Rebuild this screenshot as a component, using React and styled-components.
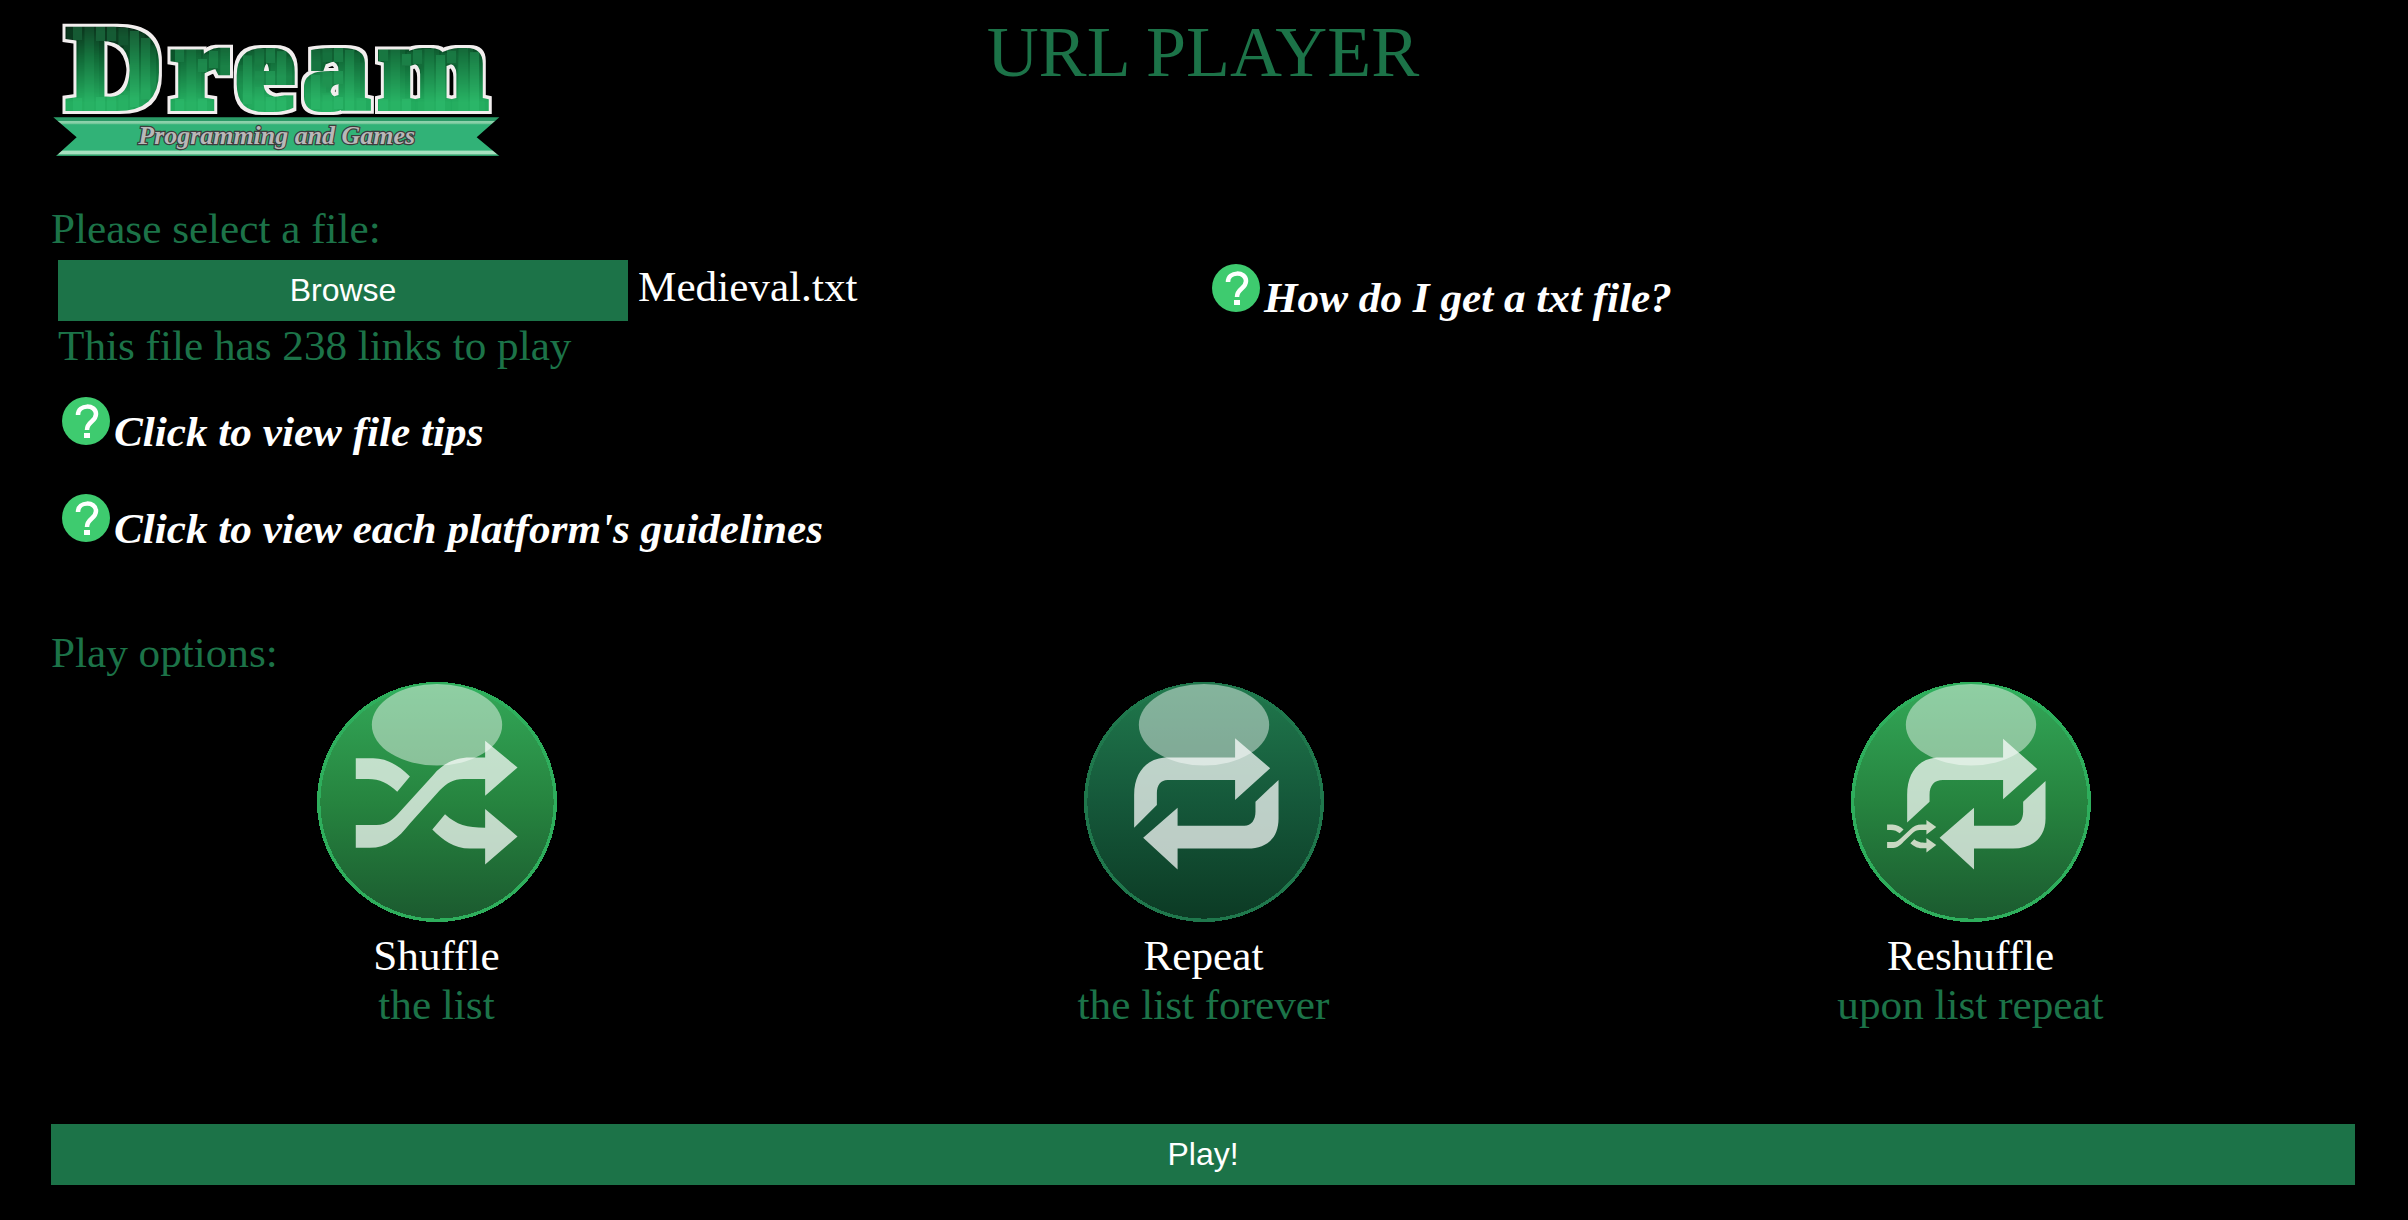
import React from "react";
import styled, { createGlobalStyle } from "styled-components";

const GREEN = "#1c7348";

const GlobalStyle = createGlobalStyle`
  html, body {
    margin: 0;
    height: 100%;
    background: #000;
    overflow: hidden;
  }
  body {
    font-family: "Liberation Serif", "Times New Roman", serif;
  }
`;

const Page = styled.div`
  width: 2408px;
  height: 1220px;
  padding: 0 53px 0 51px;
  box-sizing: border-box;
  display: flex;
  flex-direction: column;
`;

const Header = styled.header`
  height: 170px;
  margin: 0 -53px 0 -51px;
  padding-left: 30px;
  display: grid;
  grid-template-columns: 1fr auto 1fr;
  align-items: start;
`;

const LogoSvg = styled.svg`
  display: block;
  width: 500px;
  height: 170px;
`;

const Title = styled.h1`
  margin: 11px 0 0 -32px;
  font-size: 72px;
  line-height: 82px;
  font-weight: 400;
  color: ${GREEN};
`;

const FilePanel = styled.section`
  display: grid;
  grid-template-columns: 1fr 1fr;
  margin-top: 34px;
`;

const SectionLabel = styled.div`
  font-size: 43.2px;
  line-height: 50px;
  color: ${GREEN};
`;

const FileRow = styled.div`
  display: flex;
  align-items: flex-start;
  gap: 10px;
  margin: 6px 0 0 7px;
`;

const BrowseButton = styled.button`
  width: 570px;
  height: 61px;
  padding: 0;
  border: 0;
  background: ${GREEN};
  color: #fff;
  font-family: "Liberation Sans", Arial, sans-serif;
  font-size: 32px;
  cursor: pointer;
`;

const FileName = styled.span`
  font-size: 43.2px;
  line-height: 54px;
  color: #fff;
`;

const FileCount = styled.div`
  margin: 0 0 0 7px;
  font-size: 43.2px;
  line-height: 50px;
  color: ${GREEN};
`;

const HelpLink = styled.a`
  display: flex;
  align-items: flex-start;
  gap: 4px;
  margin-left: ${(p) => p.$indent}px;
  margin-top: ${(p) => p.$top}px;
  color: #fff;
  font-size: 43.2px;
  font-weight: 700;
  font-style: italic;
  cursor: pointer;

  span {
    line-height: 50px;
    padding-top: ${(p) => p.$textTop}px;
  }
`;

const HelpSvg = styled.svg`
  display: block;
  width: 48px;
  height: 48px;
  flex: none;
`;

const HelpColumn = styled.div`
  padding-top: 60px;
`;

const OptionsLabel = styled(SectionLabel)`
  margin-top: 74px;
`;

const Options = styled.div`
  display: grid;
  grid-template-columns: repeat(3, 1fr);
  margin-top: 4px;
  padding: 0 1px 0 2px;
`;

const Option = styled.button`
  display: flex;
  flex-direction: column;
  align-items: center;
  padding: 0;
  border: 0;
  background: none;
  font-family: inherit;
  cursor: pointer;
`;

const OptionSvg = styled.svg`
  display: block;
  width: 240px;
  height: 240px;
`;

const OptionName = styled.div`
  margin-top: 9px;
  font-size: 43.2px;
  line-height: 49px;
  color: #fff;
`;

const OptionNote = styled.div`
  font-size: 43.2px;
  line-height: 49px;
  color: ${GREEN};
`;

const PlayButton = styled.button`
  display: block;
  width: 100%;
  height: 61px;
  margin-top: 95px;
  padding: 0;
  border: 0;
  background: ${GREEN};
  color: #fff;
  font-family: "Liberation Sans", Arial, sans-serif;
  font-size: 32px;
  cursor: pointer;
`;

function Logo() {
  return (
    <LogoSvg viewBox="0 0 1500 510">
      <defs>
        <linearGradient id="dreamFill" x1="0" y1="0" x2="0" y2="1">
          <stop offset="0.14" stopColor="#02140a" />
          <stop offset="0.36" stopColor="#0b5c2e" />
          <stop offset="0.66" stopColor="#24b463" />
        </linearGradient>
        <pattern id="dreamTile" width="34" height="510" patternUnits="userSpaceOnUse">
          <rect width="34" height="510" fill="url(#dreamFill)" />
          <rect x="6" width="3" height="510" fill="#3bd27c" opacity="0.4" />
          <rect x="22" width="2" height="510" fill="#3bd27c" opacity="0.25" />
        </pattern>
        <filter id="dreamOutline" x="-5%" y="-5%" width="110%" height="110%" colorInterpolationFilters="sRGB">
          <feMorphology in="SourceAlpha" operator="dilate" radius="22" result="outer" />
          <feFlood floodColor="#f2eeee" />
          <feComposite in2="outer" operator="in" result="rim" />
          <feMorphology in="SourceGraphic" operator="dilate" radius="11" result="body" />
          <feMerge result="merged">
            <feMergeNode in="rim" />
            <feMergeNode in="body" />
          </feMerge>
          <feGaussianBlur in="merged" stdDeviation="1.5" />
        </filter>
        <linearGradient id="ribbonFill" x1="0" y1="0" x2="0" y2="1">
          <stop offset="0" stopColor="#2a9a66" />
          <stop offset="0.09" stopColor="#2a9a66" />
          <stop offset="0.11" stopColor="#9ad8b4" />
          <stop offset="0.17" stopColor="#6cc596" />
          <stop offset="0.19" stopColor="#31b277" />
          <stop offset="0.85" stopColor="#31b277" />
          <stop offset="0.87" stopColor="#a8e0c0" />
          <stop offset="0.95" stopColor="#a8e0c0" />
          <stop offset="0.97" stopColor="#2a9a66" />
        </linearGradient>
      </defs>
      <text
        x="112"
        y="320"
        textLength="1288"
        lengthAdjust="spacingAndGlyphs"
        letterSpacing="26"
        fontFamily="'Liberation Serif', serif"
        fontWeight="700"
        fontSize="350"
        fill="url(#dreamTile)"
        filter="url(#dreamOutline)"
      >
        Dream
      </text>
      <polygon points="70,352 1408,352 1340,412 1408,468 78,468 140,412" fill="url(#ribbonFill)" />
      <text
        x="325"
        y="432"
        textLength="830"
        lengthAdjust="spacingAndGlyphs"
        fontFamily="'Liberation Serif', serif"
        fontWeight="700"
        fontStyle="italic"
        fontSize="76"
        fill="#b8b8b8"
        stroke="#3d3d3d"
        strokeWidth="7"
        paintOrder="stroke"
      >
        Programming and Games
      </text>
    </LogoSvg>
  );
}

function HelpIcon() {
  return (
    <HelpSvg viewBox="0 0 48 48">
      <circle cx="24" cy="24" r="24" fill="#3ecb6f" />
      <path d="M16 18 C16 7 34 7 34 17 C34 25 25 24 25 33" fill="none" stroke="#fff" strokeWidth="4.5" />
      <rect x="22" y="36" width="6" height="5" fill="#fff" />
    </HelpSvg>
  );
}

const SHUFFLE_PATHS = [
  "M168 470 L230 470 C262 470 280 452 300 430 L400 320 C425 290 460 268 510 268 L555 268 L555 218 L652 298 L555 382 L555 332 L490 332 C460 332 440 345 420 365 L330 465 C295 510 260 538 210 538 L168 538 Z",
  "M168 270 L220 270 C265 270 300 295 330 325 L292 370 C265 345 240 332 205 332 L168 332 Z",
  "M435 438 C470 470 500 478 555 478 L555 422 L652 504 L555 588 L555 540 L510 540 C460 540 430 515 397 483 Z",
];

const REPEAT_PATHS = [
  "M190 478 L190 380 C190 310 230 268 290 268 L492 268 L492 210 L597 300 L492 395 L492 335 L290 335 C270 335 258 350 258 375 L258 410 Z",
  "M622 335 L622 450 C622 510 585 540 530 540 L320 540 L320 603 L217 508 L320 418 L320 472 L520 472 C540 472 553 455 553 430 L553 400 Z",
];

const RESHUFFLE_PATHS = [
  "M228 462 L228 380 C228 310 265 268 325 268 L515 268 L515 212 L617 302 L515 393 L515 335 L335 335 C310 335 295 350 295 380 L295 400 Z",
  "M642 338 L642 450 C642 510 600 540 545 540 L428 540 L428 603 L325 508 L428 418 L428 472 L540 472 C565 472 575 450 575 430 L575 400 Z",
];

function OptionIcon({ id, originX, top, middle, bottom, rim, paths, mini }) {
  const cx = originX + 359;
  return (
    <OptionSvg viewBox={`${originX} 42 718 718`}>
      <defs>
        <linearGradient id={`${id}Ball`} x1="0" y1="0" x2="0" y2="1">
          <stop offset="0" stopColor={top} />
          <stop offset="0.5" stopColor={middle} />
          <stop offset="1" stopColor={bottom} />
        </linearGradient>
      </defs>
      <circle cx={cx} cy="401" r="354" fill={`url(#${id}Ball)`} stroke={rim} strokeWidth="10" shapeRendering="crispEdges" />
      {paths.map((d) => (
        <path key={d} d={d} fill="#fff" opacity="0.72" />
      ))}
      {mini &&
        SHUFFLE_PATHS.map((d) => (
          <path
            key={d}
            d={d}
            fill="#e6eadb"
            opacity="0.85"
            transform="translate(168 455) scale(0.304 0.262) translate(-168 -218)"
          />
        ))}
      <ellipse cx={cx} cy="170" rx="195" ry="122" fill="#fff" opacity="0.45" />
    </OptionSvg>
  );
}

export default function App() {
  return (
    <Page>
      <GlobalStyle />
      <Header>
        <Logo />
        <Title>URL PLAYER</Title>
      </Header>

      <FilePanel>
        <div>
          <SectionLabel>Please select a file:</SectionLabel>
          <FileRow>
            <BrowseButton>Browse</BrowseButton>
            <FileName>Medieval.txt</FileName>
          </FileRow>
          <FileCount>This file has 238 links to play</FileCount>
          <HelpLink $indent={11} $top={26} $textTop={10}>
            <HelpIcon />
            <span>Click to view file tips</span>
          </HelpLink>
          <HelpLink $indent={11} $top={37} $textTop={10}>
            <HelpIcon />
            <span>Click to view each platform's guidelines</span>
          </HelpLink>
        </div>
        <HelpColumn>
          <HelpLink $indent={9} $top={0} $textTop={9}>
            <HelpIcon />
            <span>How do I get a txt file?</span>
          </HelpLink>
        </HelpColumn>
      </FilePanel>

      <OptionsLabel>Play options:</OptionsLabel>
      <Options>
        <Option>
          <OptionIcon id="shuffle" originX={52} top="#33a858" middle="#26843f" bottom="#1b5a2f" rim="#2eae5c" paths={SHUFFLE_PATHS} />
          <OptionName>Shuffle</OptionName>
          <OptionNote>the list</OptionNote>
        </Option>
        <Option>
          <OptionIcon id="repeat" originX={40} top="#20784c" middle="#15583a" bottom="#0c3a24" rim="#1f774c" paths={REPEAT_PATHS} />
          <OptionName>Repeat</OptionName>
          <OptionNote>the list forever</OptionNote>
        </Option>
        <Option>
          <OptionIcon id="reshuffle" originX={60} top="#33a858" middle="#26843f" bottom="#1b5a2f" rim="#2eae5c" paths={RESHUFFLE_PATHS} mini />
          <OptionName>Reshuffle</OptionName>
          <OptionNote>upon list repeat</OptionNote>
        </Option>
      </Options>

      <PlayButton>Play!</PlayButton>
    </Page>
  );
}
